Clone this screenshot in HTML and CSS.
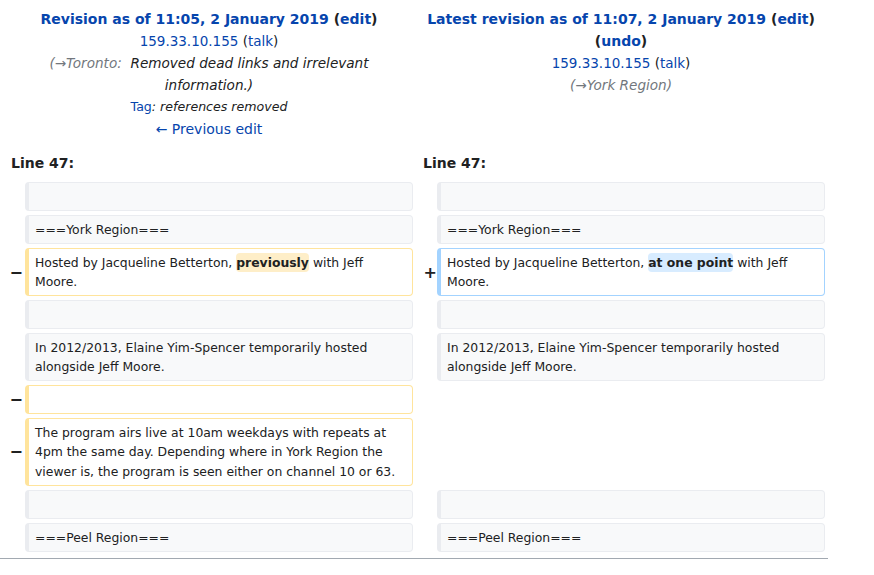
FILE: index.html
```html
<!DOCTYPE html>
<html lang="en">
<head>
<meta charset="utf-8">
<title>Diff</title>
<link rel="stylesheet" href="styles.css">
</head>
<body>
<div class="diff">
  <div class="ntitle">
    <div class="title"><a class="lnk">Revision as of 11:05, 2 January 2019</a> (<a class="lnk">edit</a>)</div>
    <div class="user"><a class="lnk">159.33.10.155</a> (<a class="lnk">talk</a>)</div>
    <div class="comment"><span class="auto">(→Toronto:&nbsp;</span> Removed dead links and irrelevant information.)</div>
    <div class="tags"><a class="lnk">Tag</a><i>: references removed</i></div>
    <div><a class="lnk">← Previous edit</a></div>
  </div>
  <div class="ntitle">
    <div class="title"><a class="lnk">Latest revision as of 11:07, 2 January 2019</a> (<a class="lnk">edit</a>)</div>
    <div class="title">(<a class="lnk">undo</a>)</div>
    <div class="user"><a class="lnk">159.33.10.155</a> (<a class="lnk">talk</a>)</div>
    <div class="comment"><span class="auto">(→York Region)</span></div>
  </div>

  <div class="lineno">Line 47:</div>
  <div class="lineno">Line 47:</div>

  <div class="marker"></div>
  <div class="line ctx"></div>
  <div class="marker"></div>
  <div class="line ctx"></div>

  <div class="marker"></div>
  <div class="line ctx">===York Region===</div>
  <div class="marker"></div>
  <div class="line ctx">===York Region===</div>

  <div class="marker">−</div>
  <div class="line del">Hosted by Jacqueline Betterton, <del class="chg">previously</del> with Jeff Moore.</div>
  <div class="marker plus">+</div>
  <div class="line add">Hosted by Jacqueline Betterton, <ins class="chg">at one point</ins> with Jeff Moore.</div>

  <div class="marker"></div>
  <div class="line ctx"></div>
  <div class="marker"></div>
  <div class="line ctx"></div>

  <div class="marker"></div>
  <div class="line ctx">In 2012/2013, Elaine Yim-Spencer temporarily hosted alongside Jeff Moore.</div>
  <div class="marker"></div>
  <div class="line ctx">In 2012/2013, Elaine Yim-Spencer temporarily hosted alongside Jeff Moore.</div>

  <div class="marker">−</div>
  <div class="line del"></div>
  <div class="marker"></div>
  <div class="empty"></div>

  <div class="marker">−</div>
  <div class="line del">The program airs live at 10am weekdays with repeats at 4pm the same day. Depending where in York Region the viewer is, the program is seen either on channel 10 or 63.</div>
  <div class="marker"></div>
  <div class="empty"></div>

  <div class="marker"></div>
  <div class="line ctx"></div>
  <div class="marker"></div>
  <div class="line ctx"></div>

  <div class="marker"></div>
  <div class="line ctx">===Peel Region===</div>
  <div class="marker"></div>
  <div class="line ctx">===Peel Region===</div>
</div>
<div class="rule"></div>
</body>
</html>
```

FILE: styles.css
```css
html, body {
  margin: 0;
  padding: 0;
  background: #ffffff;
}
body {
  font-family: "DejaVu Sans", sans-serif;
  color: #202122;
  font-size: 14px;
}
.diff {
  display: grid;
  grid-template-columns: 16px 388px 16px 388px;
  column-gap: 4px;
  row-gap: 4px;
  padding: 8px 4px 0 5px;
  width: 828px;
  box-sizing: border-box;
}
.ntitle {
  grid-column: span 2;
  text-align: center;
  line-height: 22px;
  font-size: 14px;
}
.lnk {
  color: #0645ad;
  text-decoration: none;
}
.title {
  font-weight: bold;
}
.user {
  font-size: 13.5px;
}
.comment {
  font-style: italic;
  font-size: 13.6px;
}
.auto {
  color: #72777d;
}
.tags {
  font-size: 12.6px;
}
.tags i {
  font-style: italic;
}
.lineno {
  grid-column: span 2;
  font-weight: bold;
  line-height: 22px;
  padding: 8px 6px 4px;
}
.marker {
  display: flex;
  align-items: center;
  justify-content: flex-end;
  font-weight: bold;
  font-size: 16px;
  margin-right: -2px;
}
.marker.plus {
  margin-right: -4px;
}
.line {
  font-size: 12.4px;
  line-height: 19.2px;
  padding: 3.9px 6px;
  border-style: solid;
  border-width: 1px 1px 1px 4px;
  border-radius: 4px;
  min-height: 19.2px;
  box-sizing: content-box;
  word-wrap: break-word;
}
.ctx {
  background: #f8f9fa;
  border-color: #eaecf0;
}
.del {
  background: #ffffff;
  border-color: #ffe49c;
}
.add {
  background: #ffffff;
  border-color: #a3d3ff;
}
.chg {
  font-weight: bold;
  text-decoration: none;
  border-radius: 4px;
  padding: 2px 0;
}
del.chg {
  background: #feeec8;
}
ins.chg {
  background: #d8ecff;
}
.rule {
  width: 828px;
  border-top: 1px solid #a2a9b1;
  margin-top: 6px;
}
```
